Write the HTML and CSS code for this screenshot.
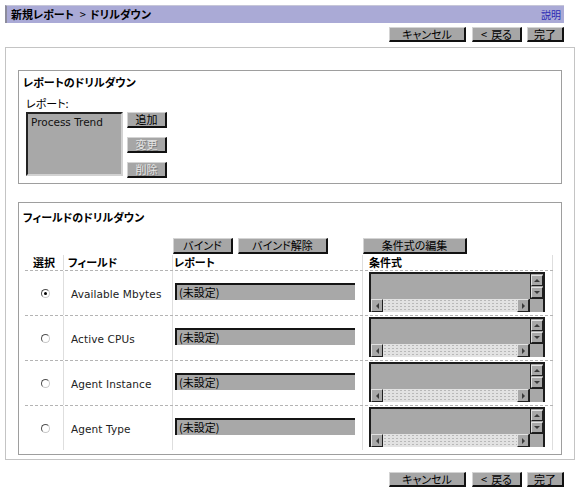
FILE: index.html
```html
<!DOCTYPE html>
<html lang="ja">
<head>
<meta charset="utf-8">
<title>ドリルダウン</title>
<link rel="stylesheet" href="styles.css">
</head>
<body>
<div class="page">
  <div class="titlebar">
    <span class="crumb">新規レポート<span class="sep">&gt;</span>ドリルダウン</span>
    <a class="help" href="#">説明</a>
  </div>
  <div class="actions top">
    <button class="btn w-cancel">キャンセル</button>
    <button class="btn w-back">&lt;<span class="gap">戻る</span></button>
    <button class="btn w-done">完了</button>
  </div>

  <div class="panel">
    <section class="box box-report">
      <div class="box-title">レポートのドリルダウン</div>
      <div class="label">レポート:</div>
      <div class="report-row">
        <div class="listbox"><span class="latin">Process Trend</span></div>
        <div class="side-btns">
          <button class="btn side">追加</button>
          <button class="btn side disabled">変更</button>
          <button class="btn side disabled">削除</button>
        </div>
      </div>
    </section>

    <section class="box box-field">
      <div class="box-title">フィールドのドリルダウン</div>
      <div class="grid">
        <div class="row tools">
          <div class="cell"></div>
          <div class="cell"></div>
          <div class="cell tools-report">
            <button class="btn w-bind">バインド</button>
            <button class="btn w-unbind">バインド解除</button>
          </div>
          <div class="cell">
            <button class="btn w-edit">条件式の編集</button>
          </div>
        </div>
        <div class="row head">
          <div class="cell c1 h1">選択</div>
          <div class="cell c2 h2">フィールド</div>
          <div class="cell c3 h3">レポート</div>
          <div class="cell c4 h4">条件式</div>
        </div>

        <div class="row data">
          <div class="cell c1"><span class="radio on"></span></div>
          <div class="cell c2"><span class="latin field">Available Mbytes</span></div>
          <div class="cell c3"><div class="input">(未設定)</div></div>
          <div class="cell c4">
            <div class="ta">
              <div class="ta-main"><div class="ta-body"></div><div class="vscroll"><span class="sb up"></span><span class="sb down"></span></div></div>
              <div class="hscroll"><span class="sb left"></span><span class="track"></span><span class="sb right"></span><span class="corner"></span></div>
            </div>
          </div>
        </div>

        <div class="row data">
          <div class="cell c1"><span class="radio"></span></div>
          <div class="cell c2"><span class="latin field">Active CPUs</span></div>
          <div class="cell c3"><div class="input">(未設定)</div></div>
          <div class="cell c4">
            <div class="ta">
              <div class="ta-main"><div class="ta-body"></div><div class="vscroll"><span class="sb up"></span><span class="sb down"></span></div></div>
              <div class="hscroll"><span class="sb left"></span><span class="track"></span><span class="sb right"></span><span class="corner"></span></div>
            </div>
          </div>
        </div>

        <div class="row data">
          <div class="cell c1"><span class="radio"></span></div>
          <div class="cell c2"><span class="latin field">Agent Instance</span></div>
          <div class="cell c3"><div class="input">(未設定)</div></div>
          <div class="cell c4">
            <div class="ta">
              <div class="ta-main"><div class="ta-body"></div><div class="vscroll"><span class="sb up"></span><span class="sb down"></span></div></div>
              <div class="hscroll"><span class="sb left"></span><span class="track"></span><span class="sb right"></span><span class="corner"></span></div>
            </div>
          </div>
        </div>

        <div class="row data last">
          <div class="cell c1"><span class="radio"></span></div>
          <div class="cell c2"><span class="latin field">Agent Type</span></div>
          <div class="cell c3"><div class="input">(未設定)</div></div>
          <div class="cell c4">
            <div class="ta">
              <div class="ta-main"><div class="ta-body"></div><div class="vscroll"><span class="sb up"></span><span class="sb down"></span></div></div>
              <div class="hscroll"><span class="sb left"></span><span class="track"></span><span class="sb right"></span><span class="corner"></span></div>
            </div>
          </div>
        </div>
      </div>
    </section>
  </div>

  <div class="actions bottom">
    <button class="btn w-cancel">キャンセル</button>
    <button class="btn w-back">&lt;<span class="gap">戻る</span></button>
    <button class="btn w-done">完了</button>
  </div>
</div>
</body>
</html>
```

FILE: styles.css
```css
* { box-sizing: border-box; }

body {
  margin: 0;
  background: #fff;
  color: #000;
  font-family: "Noto Sans CJK JP", sans-serif;
  font-size: 11px;
  font-feature-settings: "palt";
}

.page {
  width: 580px;
  padding: 5px 0 0 5px;
}

.latin {
  font-family: "DejaVu Sans", sans-serif;
  font-feature-settings: normal;
}

/* title bar */
.titlebar {
  width: 559px;
  height: 18px;
  background: #aaaad6;
  border-top: 1px solid #c6c6d8;
  border-left: 2px solid #8c8c9c;
  display: flex;
  align-items: center;
  justify-content: space-between;
  padding: 0 3px 0 4px;
}
.crumb {
  font-weight: bold;
  font-size: 11px;
  line-height: 13px;
}
.sep {
  margin: 0 4px 0 6px;
  font-weight: normal;
}
.gap { margin-left: 4px; }
.help {
  color: #2a2ab4;
  font-size: 10px;
  line-height: 12px;
  text-decoration: none;
}

/* action buttons */
.actions {
  width: 559px;
  display: flex;
  justify-content: flex-end;
  gap: 5px;
}
.actions.top { margin-top: 4px; }
.actions.bottom { margin-top: 12px; }

.btn {
  appearance: none;
  margin: 0;
  padding: 0;
  height: 15px;
  background: #a6a6a6;
  border-style: solid;
  border-width: 1px 2px 2px 1px;
  border-color: #d4d4d4 #111 #111 #d4d4d4;
  font: inherit;
  font-size: 11px;
  line-height: 11px;
  color: #000;
  display: flex;
  align-items: center;
  justify-content: center;
}
.w-cancel { width: 77px; margin-right: 1px; }
.w-back { width: 50px; }
.w-done { width: 37px; }
.w-bind { width: 60px; height: 16px; }
.w-unbind { width: 90px; height: 16px; }
.w-edit { width: 104px; height: 16px; }

.btn.disabled {
  color: #e4e4e4;
  text-shadow: 1px 1px 0 #7a7a7a;
}

/* panel */
.panel {
  width: 570px;
  margin-top: 5px;
  border: 1px solid #c4c4c4;
  padding: 22px 12px 4px 12px;
}

.box {
  border: 1px solid #9e9e9e;
  padding-left: 4px;
}
.box-title {
  font-weight: bold;
  line-height: 13px;
  height: 13px;
}

.box-report {
  padding-top: 5px;
  padding-bottom: 5px;
}
.label {
  margin-top: 8px;
  margin-left: 3px;
  line-height: 13px;
  height: 13px;
}
.report-row {
  margin-top: 2px;
  margin-left: 3px;
  display: flex;
  gap: 4px;
  align-items: flex-start;
}
.listbox {
  width: 97px;
  height: 64px;
  background: #a8a8a8;
  border-style: solid;
  border-width: 2px;
  border-color: #222 #d2d2d2 #d2d2d2 #222;
  padding: 1px 3px;
  font-size: 10.5px;
  line-height: 14px;
  color: #111;
}
.side-btns {
  display: flex;
  flex-direction: column;
  gap: 9px;
}
.btn.side {
  width: 40px;
  height: 16px;
}

.box-field {
  margin-top: 18px;
  padding-top: 8px;
  padding-bottom: 4px;
}

/* grid table */
.grid {
  margin-top: 14px;
  margin-left: 2px;
  width: 528px;
}
.row {
  display: grid;
  grid-template-columns: 39px 109px 190px 190px;
}
.row.tools { height: 17px; }
.tools-report {
  display: flex;
  gap: 5px;
}
.row.head {
  height: 16px;
  border-bottom: 1px dashed #b4b4b4;
}
.row.data {
  height: 45px;
  border-bottom: 1px dashed #b4b4b4;
}
.row.data.last {
  height: 44px;
  border-bottom: none;
}
.row.head .cell,
.row.data .cell {
  border-right: 1px solid #dedede;
}
.row.head .cell {
  font-weight: bold;
  line-height: 14px;
}
.h1 { padding-left: 8px; }
.h2 { padding-left: 4px; }
.h3 { padding-left: 1px; }
.h4 { padding-left: 6px; }

.row.data .cell {
  display: flex;
  align-items: center;
}
.row.data .c1 { padding-left: 16px; padding-top: 1px; }
.row.data .c2 { padding-left: 7px; padding-top: 1px; }
.row.data .c4 { align-items: flex-start; padding-left: 6px; padding-top: 1px; }

.field {
  font-size: 10.5px;
  color: #222;
  letter-spacing: 0.1px;
}

.radio {
  width: 9px;
  height: 9px;
  border-radius: 50%;
  border: 1px solid;
  border-color: #505050 #c8c8c8 #c8c8c8 #505050;
  background: #fff;
  display: flex;
  align-items: center;
  justify-content: center;
}
.radio.on::after {
  content: "";
  width: 3px;
  height: 3px;
  border-radius: 50%;
  background: #000;
}

.input {
  margin-left: 2px;
  margin-top: -3px;
  width: 180px;
  height: 17px;
  background: #a8a8a8;
  border-top: 2px solid #151515;
  border-left: 2px solid #151515;
  padding-left: 2px;
  line-height: 14px;
  font-size: 11px;
}

/* text area with scrollbars */
.ta {
  width: 176px;
  height: 40px;
  border: 2px solid #1c1c1c;
  background: #a8a8a8;
  display: flex;
  flex-direction: column;
}
.ta-main {
  flex: 1;
  display: flex;
}
.ta-body { flex: 1; }
.vscroll {
  width: 13px;
  display: flex;
  flex-direction: column;
  gap: 1px;
  padding-top: 1px;
  border-left: 1px solid #1c1c1c;
  border-bottom: 1px solid #1c1c1c;
}
.hscroll {
  height: 13px;
  display: flex;
}
.sb {
  width: 12px;
  height: 11px;
  background: #a8a8a8;
  border-style: solid;
  border-width: 1px;
  border-color: #e2e2e2 #202020 #202020 #e2e2e2;
  display: flex;
  align-items: center;
  justify-content: center;
}
.sb.left, .sb.right { height: 13px; }
.sb::after {
  content: "";
  width: 0;
  height: 0;
  border: 3px solid transparent;
}
.sb.up::after { border-bottom-color: #3a3a3a; border-top-width: 0; }
.sb.down::after { border-top-color: #3a3a3a; border-bottom-width: 0; }
.sb.left::after { border-right-color: #3a3a3a; border-left-width: 0; }
.sb.right::after { border-left-color: #3a3a3a; border-right-width: 0; }
.track {
  flex: 1;
  background-color: #e2e2e2;
  background-image: radial-gradient(circle, #b8b8b8 0.7px, transparent 0.9px);
  background-size: 4px 3px;
}
.corner {
  width: 14px;
  border-left: 1px solid #1c1c1c;
  background: #a8a8a8;
}
```
